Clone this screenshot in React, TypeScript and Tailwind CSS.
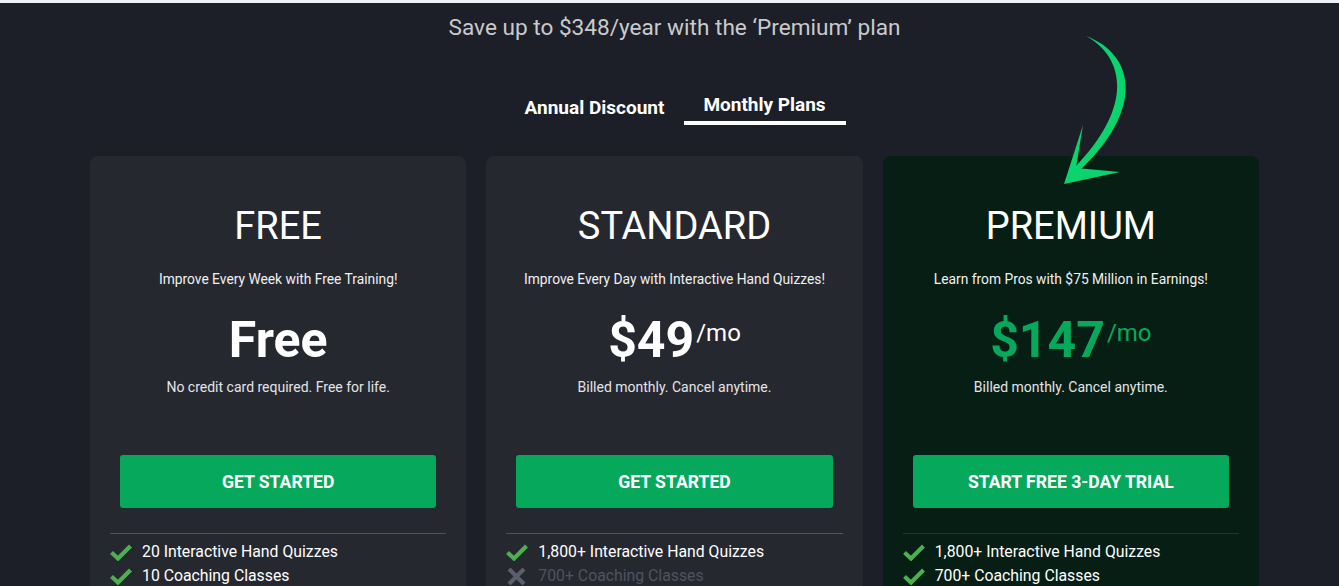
type Feature = { text: string; included: boolean }

interface Plan {
  name: string
  tagline: string
  price: string
  perMonth: boolean
  note: string
  cta: string
  premium?: boolean
  features: Feature[]
}

const plans: Plan[] = [
  {
    name: 'FREE',
    tagline: 'Improve Every Week with Free Training!',
    price: 'Free',
    perMonth: false,
    note: 'No credit card required. Free for life.',
    cta: 'GET STARTED',
    features: [
      { text: '20 Interactive Hand Quizzes', included: true },
      { text: '10 Coaching Classes', included: true },
    ],
  },
  {
    name: 'STANDARD',
    tagline: 'Improve Every Day with Interactive Hand Quizzes!',
    price: '$49',
    perMonth: true,
    note: 'Billed monthly. Cancel anytime.',
    cta: 'GET STARTED',
    features: [
      { text: '1,800+ Interactive Hand Quizzes', included: true },
      { text: '700+ Coaching Classes', included: false },
    ],
  },
  {
    name: 'PREMIUM',
    tagline: 'Learn from Pros with $75 Million in Earnings!',
    price: '$147',
    perMonth: true,
    note: 'Billed monthly. Cancel anytime.',
    cta: 'START FREE 3-DAY TRIAL',
    premium: true,
    features: [
      { text: '1,800+ Interactive Hand Quizzes', included: true },
      { text: '700+ Coaching Classes', included: true },
    ],
  },
]

function CurvedArrow() {
  // hand-drawn arrow pointing at the premium card
  return (
    <svg
      className="absolute left-[960px] top-[-126px] w-[90px] h-[160px] pointer-events-none"
      viewBox="1050 30 90 160"
    >
      <path
        d="M1086 36 C1134 54 1146 108 1079 171 L1074 168 C1133 108 1126 58 1086 36 Z"
        fill="#0bd46e"
      />
      <polygon points="1064,184 1083,125 1076,168 1120,172" fill="#0bd46e" />
    </svg>
  )
}

function CheckMark() {
  return (
    <svg className="w-[22px] h-[17px] shrink-0" viewBox="0 0 22 17">
      <path d="M1.5 8.5 L8 14.5 L20.5 2" fill="none" stroke="#4caf50" strokeWidth="4.2" />
    </svg>
  )
}

function Cross() {
  return (
    <svg className="w-[22px] h-[17px] shrink-0" viewBox="0 0 22 17">
      <path d="M3 1 L18 16 M18 1 L3 16" fill="none" stroke="#5b5f6b" strokeWidth="4.2" />
    </svg>
  )
}

function PlanCard({ plan }: { plan: Plan }) {
  const p = plan.premium
  return (
    <div className={`rounded-lg flex flex-col items-center ${p ? 'bg-[#061e14]' : 'bg-[#262830]'}`}>
      <h2 className="mt-[51px] text-[38px] leading-none text-white">{plan.name}</h2>
      <p className="mt-[24px] text-[13.8px] leading-5 text-[#f0f0f0]">{plan.tagline}</p>
      <div className="mt-[26px] flex items-start">
        <span className={`text-[50px] leading-none font-bold ${p ? 'text-[#06a95b]' : 'text-white'}`}>
          {plan.price}
        </span>
        {plan.perMonth && (
          <span className={`ml-[2px] mt-[6px] text-[24px] leading-none ${p ? 'text-[#06a95b]' : 'text-white'}`}>
            /mo
          </span>
        )}
      </div>
      <p className="mt-[12px] text-[14px] leading-5 text-[#e4e4e4]">{plan.note}</p>
      <div className="self-stretch px-[30px] mt-[58px]">
        <button className="w-full h-[53px] pt-[2px] rounded-[3px] bg-[#06a95b] text-white text-[17.6px] font-bold">
          {plan.cta}
        </button>
      </div>
      <div className="self-stretch px-[20px] mt-[25px]">
        <div className={`h-px ${p ? 'bg-[#1f3b2c]' : 'bg-[#50535d]'}`} />
        <ul className="mt-[6px]">
          {plan.features.map((f) => (
            <li key={f.text} className="flex items-center gap-[10px] h-6 text-[15.8px]">
              {f.included ? <CheckMark /> : <Cross />}
              <span className={f.included ? 'text-white' : 'text-[#4f5360]'}>{f.text}</span>
            </li>
          ))}
        </ul>
      </div>
    </div>
  )
}

export default function App() {
  return (
    <div className="h-[586px] bg-[#1c1f27] font-['Roboto',sans-serif] overflow-hidden">
      <div className="h-[3px] bg-[#eef0f5]" />
      <div className="pl-[10px] flex flex-col items-center">
        {/* Heading */}
        <p className="mt-[10px] text-[22.6px] leading-[30px] text-[#c9cacd]">
          Save up to $348/year with the ‘Premium’ plan
        </p>

        {/* Tabs */}
        <div className="mt-[51px] flex items-start gap-2 pl-[10px]">
          <button className="w-[162px] pt-[3px] text-[19px] leading-[22px] font-bold text-white">
            Annual Discount
          </button>
          <button className="w-[162px] pb-[5px] border-b-4 border-white text-[19px] leading-[22px] font-bold text-white">
            Monthly Plans
          </button>
        </div>

        {/* Cards */}
        <div className="relative mt-[31px] w-[1169px] grid grid-cols-3 gap-5 h-[460px]">
          {plans.map((plan) => (
            <PlanCard key={plan.name} plan={plan} />
          ))}
          <CurvedArrow />
        </div>
      </div>
    </div>
  )
}
